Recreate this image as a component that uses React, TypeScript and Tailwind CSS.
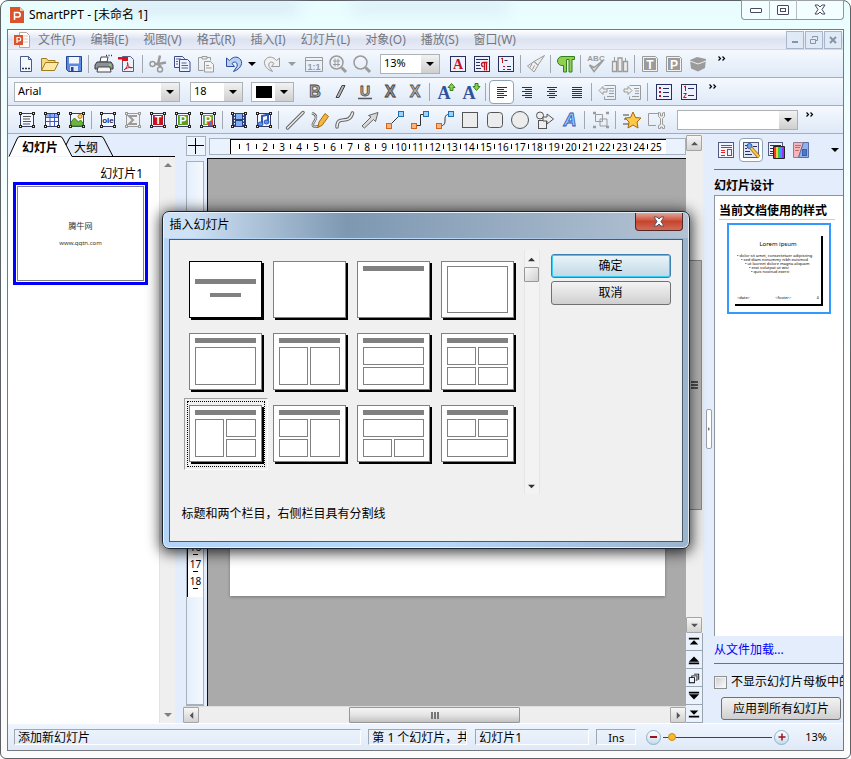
import { useState } from 'react';
import type { ReactNode } from 'react';
import clsx from 'clsx';

const NAVY = '#27305f';
const GRAY = '#9b9b9b';

function Svg({ children }: { children: ReactNode }) {
    return (
        <svg viewBox="0 0 20 20" className="w-5 h-5 shrink-0 overflow-visible" fill="none" aria-hidden="true">
            {children}
        </svg>
    );
}

// Object icons share a square frame with four grab handles
function Framed({ children, muted }: { children?: ReactNode; muted?: boolean }) {
    const line = muted ? GRAY : '#222';
    return (
        <Svg>
            <rect x="3.500" y="3.500" width="13" height="13" fill={muted ? '#f1f1f1' : '#f4f7ff'} stroke={muted ? GRAY : '#353c66'} />
            {children}
            {[[2, 2], [15, 2], [2, 15], [15, 15]].map(([x, y]) => (
                <rect key={`${x}-${y}`} x={x + 0.5} y={y + 0.5} width="2" height="2" fill={muted ? '#eee' : '#ffeeb0'} stroke={line} />
            ))}
        </Svg>
    );
}

function Letter({ x = 10, y = 15, size = 15, fill = '#fff', stroke, italic, children }: {
    x?: number; y?: number; size?: number; fill?: string; stroke?: string; italic?: boolean; children: ReactNode;
}) {
    return (
        <text x={x} y={y} fontSize={size} fill={fill} stroke={stroke} strokeWidth={stroke ? 0.8 : 0} textAnchor="middle"
            fontWeight="bold" fontStyle={italic ? 'italic' : 'normal'} fontFamily="Liberation Sans, sans-serif">
            {children}
        </text>
    );
}

const FileRow: Record<string, ReactNode> = {
    新建: (
        <Svg>
            <path d="M4.500 2.500h8l3 3v12h-11z" fill="#f5f8ff" stroke="#4a5a8a" />
            <path d="M12.500 2.500v3h3" stroke="#4a5a8a" />
            <path d="M6 14.500h2M9 14.500h2M12 14.500h2" stroke={NAVY} strokeWidth="1.600" />
        </Svg>
    ),
    打开: (
        <Svg>
            <path d="M1.500 16.500v-12h5l1.500 2h7v3" fill="#f7d983" stroke="#a07c1e" />
            <path d="M1.500 16.500l4-8h13l-4 8z" fill="#fde9a6" stroke="#a07c1e" />
        </Svg>
    ),
    保存: (
        <Svg>
            <path d="M2.500 2.500h15v15h-13l-2-2z" fill="#5b8be0" stroke="#27458f" />
            <rect x="5" y="3" width="10" height="6.500" fill="#f2f6ff" />
            <rect x="6" y="12" width="8" height="5" fill="#dfe7f7" />
            <rect x="7" y="13" width="2.500" height="4" fill="#27458f" />
        </Svg>
    ),
};

const OutputRow: Record<string, ReactNode> = {
    打印: (
        <Svg>
            <path d="M6 8l1-5h7l-1 5z" fill="#fff" stroke="#444" />
            <path d="M3 8h14l2 3v4H1v-4z" fill="#8d9299" stroke="#33373d" />
            <path d="M4 13h12l1 5H3z" fill="#f8f8f8" stroke="#444" />
            <path d="M15 11h2" stroke="#8ee04a" strokeWidth="1.500" />
            <path d="M12 1.500h1M14.500 1.500h1M17 1.500h1" stroke={NAVY} strokeWidth="1.500" />
        </Svg>
    ),
    导出PDF: (
        <Svg>
            <path d="M4.500 2.500h8l3 3v12h-11z" fill="#eef1f8" stroke="#53608a" />
            <path d="M0 3h10v4H4V5.500H0z" fill="#d8141c" />
            <path d="M6 16c3-2 4-5 3.500-7.500C10 13 12 14.500 14.500 13.500 11 13 8 14 6 16z" stroke="#d8141c" />
        </Svg>
    ),
};

const EditRow: Record<string, ReactNode> = {
    剪切: (
        <Svg>
            <path d="M12 1.500L10 10l3 3M18 8.500l-8 1.500H7" stroke={GRAY} strokeWidth="2.500" />
            <circle cx="4.500" cy="10" r="2.500" stroke={GRAY} strokeWidth="1.500" />
            <circle cx="12" cy="15.500" r="2.500" stroke={GRAY} strokeWidth="1.500" />
        </Svg>
    ),
    复制: (
        <Svg>
            <path d="M2.500 2.500h8l2 2v9h-10z" fill="#eef2ff" stroke="#3b4a80" />
            <path d="M7.500 5.500h8l2.500 2.500v9.500H7.500z" fill="#eef2ff" stroke="#3b4a80" />
            <path d="M9.500 9h5M9.500 11.500h6.500M9.500 14h6.500M4 5h5M4 7.500h2M4 10h2" stroke="#4f62a5" />
        </Svg>
    ),
    粘贴: (
        <Svg>
            <path d="M2.500 3.500h12v3M7.500 16.500h-5v-13" stroke={GRAY} />
            <path d="M6 2.500h5v2.500H6z" fill="#eee" stroke={GRAY} />
            <path d="M8.500 7.500h6l3 3v7.500h-9z" fill="#f4f4f4" stroke={GRAY} />
            <path d="M10 11.500h3M10 14h5.500" stroke={GRAY} />
        </Svg>
    ),
};

const Undo = (
    <Svg>
        <path d="M2.500 4v8.500H10.500L8 9.500c3-3 6-1 5 3L9.500 17.500C17 15 20 8 15.500 4.500c-3-2.500-7-1.500-10 2z" fill="#b9d0f5" stroke="#2b4d9b" />
    </Svg>
);

const Redo = (
    <Svg>
        <path d="M17.500 4v8.500H9.500L12 9.500c-3-3-6-1-5 3l3.500 5C3 15 0 8 4.500 4.500c3-2.500 7-1.500 10 2z" fill="#f1f1f1" stroke={GRAY} />
    </Svg>
);

const ZoomRow: Record<string, ReactNode> = {
    实际大小: (
        <Svg>
            <path d="M1.500 3.500h17v14h-17zM1.500 6.500h17" stroke={GRAY} />
            <Letter y={15.5} size={9} fill={GRAY}>1:1</Letter>
        </Svg>
    ),
    适合页面: (
        <Svg>
            <circle cx="8.500" cy="8.500" r="6.500" stroke={GRAY} strokeWidth="1.500" />
            <path d="M13.500 13.500l4.500 4.500" stroke={GRAY} strokeWidth="3" />
            <path d="M5 7h7M5 10.500h7M7 4.500v8M10 4.500v8" stroke={GRAY} />
        </Svg>
    ),
    缩放: (
        <Svg>
            <circle cx="8.500" cy="8.500" r="6.500" stroke={GRAY} strokeWidth="1.500" />
            <path d="M13.500 13.500l4.500 4.500" stroke={GRAY} strokeWidth="3" />
        </Svg>
    ),
};

const PanelRow: Record<string, ReactNode> = {
    字符格式: (
        <Svg>
            <rect x="2.500" y="2.500" width="15" height="15" fill="#eef2ff" stroke={NAVY} />
            <text x="10" y="15" fontSize="14" fontWeight="bold" textAnchor="middle" fill="#c3121d" fontFamily="Liberation Serif, serif">A</text>
        </Svg>
    ),
    段落格式: (
        <Svg>
            <rect x="2.500" y="2.500" width="15" height="15" fill="#eef2ff" stroke={NAVY} />
            <path d="M4 5.500h12M4 8.500h4M4 11.500h4M4 14.500h5" stroke={NAVY} />
            <path d="M15.500 8.500h-4a2 2 0 000 4M12.500 8.500v8M14.500 8.500v8" stroke="#c3121d" strokeWidth="1.300" />
        </Svg>
    ),
    编号格式: (
        <Svg>
            <rect x="2.500" y="2.500" width="15" height="15" fill="#eef2ff" stroke={NAVY} />
            <path d="M5 5l1.500-1v5M7 12.500h2M7 15.500h2" stroke="#c3121d" />
            <path d="M8.500 6.500h3M11 12.500h4M11 15.500h4" stroke={NAVY} />
        </Svg>
    ),
};

const Brush = (
    <Svg>
        <path d="M18.500 1.500l-6.500 9.500-4-3.500zM8 7.500l4 4-4 6.500-6.500-6z" fill="#eee" stroke={GRAY} />
        <path d="M6 9.500L4 13.500M8.500 11.500l-2 4" stroke={GRAY} />
    </Svg>
);

const Pilcrow = (
    <Svg>
        <path d="M18.500 2.500H6a4.500 4.500 0 000 9h1.500v6.500h3V5.500h2.500V18h3V5.500h2.500z" fill="#8fd04e" stroke="#35801a" />
    </Svg>
);

const ToolsRow: Record<string, ReactNode> = {
    拼写检查: (
        <Svg>
            <Letter y={7} size={8} fill={GRAY}>ABC</Letter>
            <path d="M3.500 11l4.500 6.500 9.500-11.500-9.500 7.500z" fill="#eee" stroke={GRAY} strokeWidth="1.500" />
        </Svg>
    ),
    同义词库: (
        <Svg>
            <path d="M2.500 7.500h4v10h-4zM8 4h4v13.500H8zM13.500 7.500h4v10h-4z" fill="#eee" stroke={GRAY} strokeWidth="1.300" />
            <path d="M4.500 7V3M15.500 7V4" stroke={GRAY} />
        </Svg>
    ),
};

const ObjectsRow: Record<string, ReactNode> = {
    文本文档: (
        <Svg>
            <path d="M2.500 2.500h13l2 2v13h-15z" fill="#f2f2f2" stroke={GRAY} />
            <rect x="4" y="4" width="12" height="12" fill={GRAY} />
            <Letter y={14.5} size={12}>T</Letter>
        </Svg>
    ),
    电子表格: (
        <Svg>
            <path d="M2.500 2.500h13l2 2v13h-15z" fill="#f2f2f2" stroke={GRAY} />
            <rect x="4" y="4" width="12" height="12" fill={GRAY} />
            <Letter y={14.5} size={12}>P</Letter>
        </Svg>
    ),
    组件: (
        <Svg>
            <path d="M2 6l7-3 9 2-1 9-7 3.500-7-3z" fill={GRAY} />
            <path d="M2 7l8 3 8-3" stroke="#eee" />
        </Svg>
    ),
};

const StyleRow: Record<string, ReactNode> = {
    加粗: <Svg><Letter size={16} fill="#b4b4b4" stroke="#444">B</Letter></Svg>,
    倾斜: <Svg><path d="M12 3.500h3l-6 12H6z" fill="#b4b4b4" stroke="#444" /></Svg>,
    下划线: <Svg><Letter y={13.5} size={14} fill="#b4b4b4" stroke="#444">U</Letter><path d="M3 16.500h14" stroke="#555" strokeWidth="1.500" /></Svg>,
    阴影: <Svg><Letter x={11} y={16} size={16} fill="#bbb">X</Letter><Letter size={16} fill="#999" stroke="#444">X</Letter></Svg>,
    删除线: <Svg><Letter size={16} fill="#b4b4b4" stroke="#555">X</Letter></Svg>,
};

function SizeIcon({ up }: { up?: boolean }) {
    return (
        <Svg>
            <text x="8" y="17" fontSize="18" fontWeight="bold" textAnchor="middle" fill="#30519b" fontFamily="Liberation Serif, serif">A</text>
            <path d={up ? 'M15.500 1.500l3.500 4h-2v3h-3v-3h-2z' : 'M15.500 8.500l3.500-4h-2v-3h-3v3h-2z'} fill="#8fd04e" stroke="#35801a" />
        </Svg>
    );
}

const alignPaths: Record<string, string> = {
    左对齐: 'M5 5.500h10M5 7.500h7M5 9.500h10M5 11.500h7M5 13.500h10M5 15.500h7',
    右对齐: 'M5 5.500h10M8 7.500h7M5 9.500h10M8 11.500h7M5 13.500h10M8 15.500h7',
    居中: 'M5 5.500h10M7 7.500h6M5 9.500h10M7 11.500h6M5 13.500h10M7 15.500h6',
    两端对齐: 'M5 5.500h10M5 7.500h10M5 9.500h10M5 11.500h10M5 13.500h10M5 15.500h10',
};

const IndentRow: Record<string, ReactNode> = {
    减少缩进: (
        <Svg>
            <path d="M6.500 3.500h11v14h-11v-3M9 6.500h7M11 9h5M11 11.500h5M9 14.500h7" stroke={GRAY} />
            <path d="M1 8.500l4-4v2.500h4v3H5v2.500z" fill="#eee" stroke={GRAY} />
        </Svg>
    ),
    增加缩进: (
        <Svg>
            <path d="M6.500 3.500h11v14h-11v-3M11 6.500h5M12 9h4M12 11.500h4M9 14.500h7" stroke={GRAY} />
            <path d="M9 8.500l-4-4v2.500H1v3h4v2.500z" fill="#eee" stroke={GRAY} />
        </Svg>
    ),
};

const BulletRow: Record<string, ReactNode> = {
    项目符号: (
        <Svg>
            <rect x="2.500" y="2.500" width="15" height="15" fill="#eef2ff" stroke={NAVY} />
            <path d="M5 6h2M5 10h2M5 14h2" stroke="#c3121d" strokeWidth="2" />
            <path d="M9 6.500h6M9 10.500h6M9 14.500h6" stroke={NAVY} />
        </Svg>
    ),
    编号: (
        <Svg>
            <rect x="2.500" y="2.500" width="15" height="15" fill="#eef2ff" stroke={NAVY} />
            <path d="M5 5l1.500-1v5M4.500 11.500h3l-3 4h3" stroke="#c3121d" />
            <path d="M9 6.500h6M9 13.500h6" stroke={NAVY} />
        </Svg>
    ),
};

const InsertRow: Record<string, ReactNode> = {
    文本框: <Framed><path d="M6 6.500h8M6 9h7M6 11.500h8M6 14h7" stroke="#555" /></Framed>,
    表格: (
        <Framed>
            <rect x="4" y="4" width="12" height="3" fill="#8eaaf0" />
            <path d="M4 7.500h12M4 11.500h12M8 4v12M12.500 4v12" stroke="#3a5cc0" />
        </Framed>
    ),
    图片: (
        <Framed>
            <path d="M4 16v-4l3.500-4 4 4 2-2 2.500 3v3z" fill="#6cb33e" stroke="#3b7f1c" />
            <circle cx="13" cy="6.500" r="2" fill="#ffd34d" stroke="#c47f12" />
        </Framed>
    ),
};

const OleRow: Record<string, ReactNode> = {
    OLE对象: <Framed><Letter y={13} size={8} fill="#222a55">ole</Letter></Framed>,
    公式: <Framed muted><path d="M14 6H6l4 4-4 4h8" stroke={GRAY} strokeWidth="2" /></Framed>,
    TextMaker对象: <Framed><rect x="5" y="5" width="10" height="10" fill="#c8131b" /><Letter y={14} size={11}>T</Letter></Framed>,
    PlanMaker对象: <Framed><rect x="5" y="5" width="10" height="10" fill="#5d9c1c" /><Letter y={14} size={11}>P</Letter></Framed>,
    图表: (
        <Framed>
            <rect x="5" y="5" width="10" height="10" fill="#6ba329" />
            <Letter y={14} size={11}>P</Letter>
            <path d="M10 16v-4h2v4zM14 16V9h1v7z" fill="#e23b2e" />
            <path d="M12 11h2v5h-2z" fill="#3d79d8" />
        </Framed>
    ),
};

const MediaRow: Record<string, ReactNode> = {
    影片: (
        <Framed>
            <rect x="4" y="3" width="12" height="14" fill="#2b3b7c" />
            <path d="M7 4h6v5H7zM7 11h6v5H7z" fill="#7fb0f2" />
            <path d="M5.500 4v12M14.500 4v12" stroke="#fff" strokeDasharray="1.500 1.500" />
        </Framed>
    ),
    声音: (
        <Framed>
            <path d="M8 14V6l6-1.500V12" stroke="#2b56b8" strokeWidth="2" />
            <ellipse cx="6.500" cy="14" rx="2.500" ry="2" fill="#5f93e8" stroke="#2b56b8" />
            <ellipse cx="12.500" cy="12" rx="2.500" ry="2" fill="#5f93e8" stroke="#2b56b8" />
        </Framed>
    ),
};

function Connector({ d }: { d: string }) {
    return (
        <Svg>
            <path d={d} stroke="#333" />
            <rect x="1.500" y="13.500" width="5" height="5" fill="#ffb27a" stroke="#d4641a" />
            <rect x="13.500" y="1.500" width="5" height="5" fill="#9fd2fa" stroke="#1f6fb5" />
        </Svg>
    );
}

const ShapeRow: Record<string, ReactNode> = {
    直线: <Svg><path d="M2.500 18L18 2.500" stroke="#666" strokeWidth="3.500" strokeLinecap="round" /><path d="M2.500 18L18 2.500" stroke="#eee" strokeWidth="1.500" strokeLinecap="round" /></Svg>,
    徒手线: (
        <Svg>
            <path d="M2 3c5 2 5 5 2 9s0 6 5 4" stroke="#666" strokeWidth="2.500" />
            <path d="M2 3c5 2 5 5 2 9s0 6 5 4" stroke="#eee" />
            <path d="M9 12l6-8.500 3.500 3L12 15.500l-4 1.500z" fill="#f3b63e" stroke="#a86a10" />
        </Svg>
    ),
    曲线: (
        <Svg>
            <path d="M2 17C2 4 14 16 17.500 3" stroke="#666" strokeWidth="3.500" strokeLinecap="round" />
            <path d="M2 17C2 4 14 16 17.500 3" stroke="#eee" strokeWidth="1.500" strokeLinecap="round" />
        </Svg>
    ),
    箭头: <Svg><path d="M2 16L11 7 8.500 5.500 18 2.500l-2.500 9-2-2L4.500 18z" fill="#d8d8d8" stroke="#666" /></Svg>,
    直线连接: <Connector d="M4 16L16 4" />,
    折线连接: <Connector d="M4 15.500h6.500V4.500h6" />,
    曲线连接: <Connector d="M4 16c12 0 0-12 12-12" />,
    矩形: <Svg><rect x="2.500" y="2.500" width="15" height="15" fill="#ececec" stroke="#555" /></Svg>,
    圆角矩形: <Svg><rect x="2.500" y="2.500" width="15" height="15" rx="3" fill="#ececec" stroke="#555" /></Svg>,
    椭圆: <Svg><circle cx="10" cy="10" r="8.500" fill="#ececec" stroke="#555" /></Svg>,
    自选图形: (
        <Svg>
            <circle cx="5" cy="5.500" r="3.500" fill="#eee" stroke="#555" />
            <rect x="3.500" y="10.500" width="8" height="8" fill="#eee" stroke="#555" />
            <path d="M8 7h4V4l6.500 5-6.500 5v-3H8z" fill="#eee" stroke="#555" />
        </Svg>
    ),
    艺术字: <Svg><Letter size={18} y={16} fill="#9cc5f8" stroke="#2b56b8" italic>A</Letter></Svg>,
};

const Group = (
    <Svg>
        <path d="M4.500 4.500h7v7h-7zM9 9h7v7H9z" stroke={GRAY} />
        <path d="M2 3h3M2 17h3M15 3h3M15 17h3" stroke={GRAY} strokeWidth="2.500" />
    </Svg>
);

const EffectRow: Record<string, ReactNode> = {
    动画: (
        <Svg>
            <path d="M1 5h6M2 9h4M1 14h6" stroke="#444" />
            <path d="M11 2l2.500 5.500 5.500.500-4 4 1 6-5-3-5 3 1-6-4-4 5.500-.500z" fill="#fcc94b" stroke="#a8680e" />
        </Svg>
    ),
    属性: (
        <Svg>
            <path d="M11 3.500H1.500v12H9" stroke={GRAY} />
            <path d="M11.500 2.500v4l2 2v6l-2 1v3h2v-1.500h2v1.500h2v-3l-2-1v-6l2-2v-4l-2 .500v3h-2v-3z" fill="#f2f2f2" stroke={GRAY} />
        </Svg>
    ),
};

const sideIcons: { name: string; icon: ReactNode }[] = [
    { name: '版式', icon: <Svg><rect x="2.500" y="2.500" width="15" height="15" fill="#f4f4ff" stroke="#555a80" /><path d="M5 5.500h11M5 7.500h11M5 10.500h4M5 12.500h4M5 15.500h4" stroke="#e0242c" /><rect x="11.500" y="9.500" width="4" height="6" stroke="#e0242c" /></Svg> },
    { name: '设计', icon: <Svg><rect x="2.500" y="2.500" width="15" height="15" fill="#dfe6f5" stroke="#555a80" /><path d="M4 5.500h3M4 8.500h2M4 11.500h5M4 14.500h7M12 6.500h4" stroke={NAVY} /><circle cx="8.500" cy="6" r="2.500" fill="#6aa2ef" stroke="#2b56b8" /><path d="M10 8l8 9" stroke="#9c6a10" strokeWidth="3.500" /><path d="M10 8l8 9" stroke="#fcc94b" strokeWidth="2" /></Svg> },
    { name: '配色', icon: <Svg><rect x="2.500" y="2.500" width="14" height="13" fill="#eef2ff" stroke="#555a80" /><path d="M4 5.500h11M4 8.500h4M4 11.500h4M4 13.500h4" stroke={NAVY} /><path d="M8 7h2v11H8z" fill="#e33" /><path d="M10 7h2v11h-2z" fill="#fc3" /><path d="M12 7h2v11h-2z" fill="#3c3" /><path d="M14 7h2v11h-2z" fill="#39f" /><path d="M16 7h2v11h-2z" fill="#93f" /><path d="M7.500 6.500h11v12h-11z" stroke="#222" /></Svg> },
    { name: '切换', icon: <Svg><path d="M2.500 2.500h10l-5 15h-5z" fill="#f4b6ba" stroke="#9a7a90" /><path d="M17.500 2.500h-5l-5 15h10z" fill="#8fb2e8" stroke="#5a70a5" /><path d="M4 5.500h6M4 7.500h5M4 10.500h4" stroke="#c66" /><rect x="11.500" y="9.500" width="4" height="6" fill="#4e78c8" stroke="#3f5fa8" /></Svg> },
];

const menus = ['文件(F)', '编辑(E)', '视图(V)', '格式(R)', '插入(I)', '幻灯片(L)', '对象(O)', '播放(S)', '窗口(W)'];

// Each box is [x, y, width, height] inside a 73x57 slide
type Box = [number, number, number, number];
interface Layout {
    label: string;
    title?: boolean;
    bars?: Box[];
    boxes?: Box[];
}

const layouts: Layout[] = [
    { label: '标题幻灯片', bars: [[6, 18, 61, 5], [21, 32, 31, 4]] },
    { label: '空白' },
    { label: '只有标题', title: true },
    { label: '只有内容', boxes: [[6, 5, 61, 47]] },
    { label: '标题和内容', title: true, boxes: [[6, 14, 61, 38]] },
    { label: '标题和两个栏目', title: true, boxes: [[6, 14, 29, 38], [37, 14, 30, 38]] },
    { label: '标题和两行', title: true, boxes: [[6, 14, 61, 18], [6, 34, 61, 18]] },
    { label: '标题和四个内容', title: true, boxes: [[6, 14, 29, 18], [37, 14, 30, 18], [6, 34, 29, 18], [37, 34, 30, 18]] },
    { label: '标题和两个栏目，右侧栏目具有分割线', title: true, boxes: [[6, 14, 29, 38], [37, 14, 30, 18], [37, 34, 30, 18]] },
    { label: '标题和两个栏目，左侧栏目具有分割线', title: true, boxes: [[6, 14, 29, 18], [6, 34, 29, 18], [37, 14, 30, 38]] },
    { label: '标题和两行，下方具有分割线', title: true, boxes: [[6, 14, 61, 18], [6, 34, 29, 18], [37, 34, 30, 18]] },
    { label: '标题和两行，上方具有分割线', title: true, boxes: [[6, 14, 29, 18], [37, 14, 30, 18], [6, 34, 61, 18]] },
];

function Arrow({ dir = 'down', className = 'w-2' }: { dir?: 'up' | 'down' | 'left' | 'right'; className?: string }) {
    const d = { up: 'M0 6l4-4 4 4z', down: 'M0 2h8L4 6z', left: 'M6 0v8L2 4z', right: 'M2 0v8l4-4z' }[dir];
    return <svg viewBox="0 0 8 8" className={className} fill="currentColor" aria-hidden="true"><path d={d} /></svg>;
}

function Separator() {
    return <span className="ml-0.5 w-1 h-[18px] border-l border-[#a3a8b0]" />;
}

function IconButtons({ items, slot }: { items: Record<string, ReactNode>; slot: string }) {
    return (
        <>
            {Object.entries(items).map(([name, icon]) => (
                <button key={name} title={name} className={clsx('h-6 shrink-0 flex items-center justify-center', slot)}>
                    {icon}
                </button>
            ))}
        </>
    );
}

function Combo({ label, value, className }: { label: string; value: string; className: string }) {
    return (
        <div className={clsx('relative shrink-0 h-5 bg-white border border-[#adb2b5] flex', className)}>
            <select aria-label={label} className="appearance-none w-full h-full pl-[3px] text-[11px] text-black outline-none">
                <option>{value}</option>
            </select>
            <span className="absolute right-0 inset-y-0 w-[18px] bg-gradient-to-b from-[#f2f2f2] to-[#cfcfcf] pointer-events-none flex items-center justify-center">
                <Arrow />
            </span>
        </div>
    );
}

function More() {
    return (
        <button title="更多" className="ml-2 mb-2.5">
            <svg viewBox="0 0 8 5" className="w-2 h-[5px]" fill="none" stroke="#000" strokeWidth="1.200" aria-hidden="true">
                <path d="M.500.500l2 2-2 2M4.500.500l2 2-2 2" />
            </svg>
        </button>
    );
}

function Toolbar({ children }: { children: ReactNode }) {
    return (
        <div role="toolbar" className="h-7 pl-1.5 flex items-center border-b border-[#a8adb4] bg-gradient-to-b from-[#f5f9fe] to-[#dfe9f7] overflow-hidden shrink-0">
            {children}
        </div>
    );
}

function TitleBar() {
    return (
        <header className="relative h-7 flex items-start pl-0.5 shrink-0">
            {/* Text of the window behind, seen through the glass */}
            <div className="absolute left-[102px] top-0.5 w-[190px] h-2 bg-[#b9c8e6]/60 blur-sm" />
            <div className="absolute left-[345px] top-0.5 w-[156px] h-2 bg-[#b9cbe0]/50 blur-sm" />
            <div className="relative flex items-center gap-1 h-7">
                <svg viewBox="0 0 14 16" className="w-[14px] h-4 mx-px" aria-hidden="true">
                    <path d="M0 0h10l4 4v12H0z" fill="#d9532c" />
                    <path d="M10 0v4h4z" fill="#f6c3b0" />
                    <path d="M4.500 13V5.500H8a2 2 0 010 4.500H4.500" fill="none" stroke="#fff" strokeWidth="1.500" />
                </svg>
                <h1 className="text-xs text-black">SmartPPT - [未命名 1]</h1>
            </div>
            <div className="relative ml-auto flex h-5 -mt-px border border-t-0 border-[#8e979c] rounded-b-[4px] divide-x divide-[#b6bdc1] bg-white/40">
                <button title="最小化" className="w-7 flex items-end justify-center pb-1.5"><span className="w-3 h-[5px] border border-[#444a60] bg-white rounded-[1px]" /></button>
                <button title="还原" className="w-[27px] flex items-center justify-center">
                    <span className="w-3 h-2.5 border border-[#444a60] bg-white rounded-[1px] flex items-center justify-center"><span className="w-1.5 h-1 border border-[#444a60]" /></span>
                </button>
                <button title="关闭" className="w-[46px] flex items-center justify-center">
                    <svg viewBox="0 0 12 11" className="w-3 h-[11px]"><path d="M1 1h3l2 2 2-2h3L8 5.500l3 4.500H8L6 8l-2 2H1l3-4.500z" fill="#fff" stroke="#444a60" /></svg>
                </button>
            </div>
        </header>
    );
}

function MenuBar() {
    const childButton = 'w-[18px] h-[18px] border border-[#a9b5c9] bg-[#dfeaf6] flex items-center justify-center';
    return (
        <nav className="h-5 flex items-center gap-px pl-1.5 pr-px border-b border-[#d5d9e4] bg-gradient-to-b from-white via-[#dde2f1] to-[#e9edf8] shrink-0">
            <svg viewBox="0 0 16 16" className="w-4 h-4" aria-hidden="true">
                <path d="M5.500.500h7l3 3v12h-10z" fill="#fff" stroke="#b9a8a0" />
                <path d="M9 4h5M9 7h5M9 10h5" stroke="#e5c4b8" />
                <rect y="3" width="9" height="10" fill="#d9532c" />
                <path d="M3 11V5.500h2a1.500 1.500 0 010 3.500H3" fill="none" stroke="#fff" strokeWidth="1.200" />
            </svg>
            {menus.map((menu) => (
                <button key={menu} className="px-[7px] text-xs leading-none text-[#737680] whitespace-nowrap">{menu}</button>
            ))}
            <div className="ml-auto flex gap-px">
                <button title="最小化文档" className={childButton}><span className="w-1.5 h-0.5 mt-1 bg-[#8795a8]" /></button>
                <button title="还原文档" className={childButton}>
                    <svg viewBox="0 0 8 8" className="w-2 h-2" fill="none" stroke="#8795a8"><path d="M2.500 2V.500h5v4H6M.500 3.500h5v4h-5z" /></svg>
                </button>
                <button title="关闭文档" className={childButton}>
                    <svg viewBox="0 0 8 8" className="w-2 h-2" stroke="#8795a8" strokeWidth="2"><path d="M1 1l6 6M7 1L1 7" /></svg>
                </button>
            </div>
        </nav>
    );
}

function SlideList() {
    return (
        <aside className="w-[167px] shrink-0 flex flex-col">
            <div role="tablist" className="relative h-[23px] pt-1 flex items-center text-xs leading-4">
                <svg viewBox="0 0 167 23" className="absolute inset-0 w-full h-full" fill="none" stroke="#000" aria-hidden="true">
                    <path d="M0 22.500L9 5q1-2.500 3-2.500h40q2 0 3 2.500l9 17.500z" fill="#fff" stroke="none" />
                    <path d="M1 22.500L9 5q1-2.500 3-2.500h40q2 0 3 2.500l9 17.500h103" />
                    <path d="M58 11l3-6q1-2.500 3-2.500h29q2 0 3 2.500l9 17.500" />
                </svg>
                <button role="tab" aria-selected="true" className="relative ml-3.5 font-bold">幻灯片</button>
                <button role="tab" aria-selected="false" className="relative ml-4">大纲</button>
            </div>
            <div className="flex-1 flex bg-white">
                <div className="flex-1 pl-[5px] pt-[9px]">
                    <p className="w-[130px] text-right text-xs leading-4">幻灯片1</p>
                    <button className="w-[135px] h-[103px] border-[3px] border-[#0000ff] p-px">
                        <span className="w-full h-full border border-[#808080] flex flex-col items-center justify-center gap-2 text-[#333]">
                            <span className="text-[8px] leading-[10px]">腾牛网</span>
                            <span className="text-[6px] leading-[8px]">www.qqtn.com</span>
                        </span>
                    </button>
                </div>
                <div className="w-4 bg-[#efefef] border-l border-[#e3e3e3] flex flex-col justify-between items-center py-1 text-[#808080]">
                    <Arrow dir="up" />
                    <Arrow />
                </div>
            </div>
        </aside>
    );
}

function HorizontalRuler() {
    return (
        <div className="flex-1 h-[17px] border border-[#a7b0bd] bg-[#eaf2fd] flex overflow-hidden">
            <div className="ml-5 w-[436px] border-l border-t border-black bg-white flex pl-2 text-[10px] leading-none">
                {Array.from({ length: 25 }, (_, i) => (
                    <span key={i} className="w-[17px] shrink-0 flex items-center">
                        <span className="w-px h-[5px] bg-black" />
                        <span className="flex-1 text-center">{i + 1}</span>
                    </span>
                ))}
            </div>
        </div>
    );
}

function VerticalRuler() {
    return (
        <div className="w-[18px] ml-[3px] mt-[3px] border border-[#a7b0bd] border-b-2 bg-gradient-to-r from-[#e4eefb] to-[#f5f9fe] flex flex-col overflow-hidden">
            <div className="flex-1" />
            <div className="h-[326px] mb-[107px] bg-white border-l border-black flex flex-col justify-end text-[10px] leading-none pb-2">
                {Array.from({ length: 18 }, (_, i) => (
                    <span key={i} className="h-[17px] shrink-0 flex flex-col items-center justify-end gap-0.5">
                        <span>{i + 1}</span>
                        <span className="w-[5px] h-px bg-black" />
                    </span>
                ))}
            </div>
        </div>
    );
}

function ScrollButton({ dir, className }: { dir: 'up' | 'down' | 'left' | 'right'; className: string }) {
    return (
        <button title="滚动" className={clsx('shrink-0 border border-[#a5a5a5] rounded-[1px] bg-gradient-to-b from-[#f7f7f7] to-[#d2d2d2] flex items-center justify-center text-[#555]', className)}>
            <Arrow dir={dir} className="w-[7px]" />
        </button>
    );
}

const pageIcons: { name: string; d: string }[] = [
    { name: '第一张', d: 'M2 2h12v2H2zM8 5l5 5H3z' },
    { name: '上一张', d: 'M8 3l6 6H2zM2 10h12v2H2z' },
    { name: '浏览对象', d: 'M2 6h7v1H3v5h5V7h1v6H2zM5 4h7v6h-2V9h1V5H6v1H5zM8 2h6v7h-1V3H8z' },
    { name: '下一张', d: 'M2 2h12v2H2zM2 5h12l-6 6z' },
    { name: '最后一张', d: 'M3 3h10L8 8zM2 9h12v2H2z' },
];

function Editor() {
    return (
        <section className="ml-2 flex-1 min-w-0 flex">
            <div className="flex-1 min-w-0 flex flex-col">
                <div className="h-6 shrink-0 flex items-center pl-[3px] gap-[3px]">
                    <div className="w-5 h-5 border border-[#a7b0bd] bg-[#eef4fd] flex items-center justify-center">
                        <svg viewBox="0 0 18 18" className="w-[18px] h-[18px]" stroke="#000"><path d="M1 8.500h16M8.500 1v16" /></svg>
                    </div>
                    <HorizontalRuler />
                </div>
                <div className="flex-1 flex min-h-0">
                    <VerticalRuler />
                    <div className="ml-[3px] flex-1 min-w-0 border-l border-t border-[#111] bg-[#aaaaaa] flex flex-col justify-end items-start">
                        <div className="ml-[22px] w-[435px] max-w-full h-[326px] mb-[110px] bg-white shadow-[0_1px_3px_rgba(0,0,0,0.3)]" />
                    </div>
                </div>
                <div className="h-[17px] shrink-0 flex bg-[#eeeeee] border-t border-[#dedede]">
                    <ScrollButton dir="left" className="w-4 h-4" />
                    <div className="flex-1 flex">
                        <button title="水平滚动条" className="ml-[150px] w-[171px] border border-[#979797] rounded-[1px] bg-gradient-to-b from-[#f5f5f5] via-[#e4e4e4] to-[#c2c2c2] flex items-center justify-center gap-px">
                            <span className="w-0.5 h-[7px] bg-[#777]" />
                            <span className="w-0.5 h-[7px] bg-[#777]" />
                            <span className="w-0.5 h-[7px] bg-[#777]" />
                        </button>
                    </div>
                    <ScrollButton dir="right" className="w-4 h-4" />
                </div>
            </div>
            <div className="w-[17px] shrink-0 flex flex-col bg-[#efefef]">
                <ScrollButton dir="up" className="w-4 h-4 mt-px" />
                <div className="flex-1 flex flex-col">
                    <button title="垂直滚动条" className="mt-[109px] h-[250px] w-4 border border-[#8a8a8a] bg-gradient-to-r from-[#dcdcdc] to-[#b5b5b5] flex flex-col items-center justify-center gap-px">
                        <span className="w-[7px] h-0.5 bg-[#555]" />
                        <span className="w-[7px] h-0.5 bg-[#555]" />
                        <span className="w-[7px] h-0.5 bg-[#555]" />
                    </button>
                </div>
                <ScrollButton dir="down" className="w-4 h-4" />
                {pageIcons.map(({ name, d }) => (
                    <button key={name} title={name} className="h-[18px] flex items-center justify-center bg-[#eaf2fd] border-b border-r border-[#9aa3b0]">
                        <svg viewBox="0 0 16 14" className="w-[14px] h-3"><path d={d} fill="#000" /></svg>
                    </button>
                ))}
            </div>
        </section>
    );
}

function DesignPanel() {
    return (
        <aside className="w-[129px] shrink-0 flex flex-col overflow-hidden">
            <div className="h-9 flex items-center pb-1 gap-px border-b border-[#6d7278]">
                {sideIcons.map(({ name, icon }, i) => (
                    <button
                        key={name}
                        title={name}
                        className={clsx('w-6 h-6 shrink-0 flex items-center justify-center', i === 1 && 'border border-[#8fa5b5] rounded-[4px] bg-white')}
                    >
                        {icon}
                    </button>
                ))}
                <button title="选项" className="ml-auto mr-1"><Arrow /></button>
            </div>
            <h2 className="pt-2 h-[25px] text-xs leading-4 font-bold">幻灯片设计</h2>
            <div className="flex-1 bg-white border-l border-t border-[#8f959d] pl-1">
                <h3 className="mt-1.5 h-[18px] mr-2 text-xs leading-[17px] font-bold border-b border-[#c5cfe0] whitespace-nowrap">当前文档使用的样式</h3>
                <button className="mt-[3px] ml-2 w-[104px] h-[91px] border-2 border-[#3399ff] p-1.5">
                    <span className="h-[70px] mt-1 flex flex-col border-r-2 border-b-2 border-black bg-white text-black text-left text-[4px] leading-[4px] pb-1 overflow-hidden">
                        <span className="pt-1 pb-1.5 text-center text-[6px] leading-[8px]">Lorem ipsum</span>
                        <span className="pl-0.5 whitespace-nowrap">• dolor sit amet, consectetuer adipiscing</span>
                        <span className="pl-1.5 whitespace-nowrap">• sed diam nonummy nibh euismod</span>
                        <span className="pl-2.5 whitespace-nowrap">• ut laoreet dolore magna aliquam</span>
                        <span className="pl-3.5 whitespace-nowrap">• erat volutpat ut wisi</span>
                        <span className="pl-4 whitespace-nowrap">• quis nostrud exerci</span>
                        <span className="mt-auto flex justify-between px-0.5"><span>&lt;date&gt;</span><span>&lt;footer&gt;</span><span>#</span></span>
                    </span>
                </button>
            </div>
            <a href="#load" className="h-7 flex items-center text-xs text-[#0000ff] border-b border-[#6d7278]">从文件加载...</a>
            <label className="mt-2.5 flex items-center gap-1 text-xs leading-4 whitespace-nowrap">
                <input type="checkbox" className="appearance-none w-[13px] h-[13px] shrink-0 border border-[#8e8f8f] bg-gradient-to-br from-[#c9ccd0] to-white shadow-[inset_0_0_0_1px_#f4f4f4]" />
                不显示幻灯片母板中的对象
            </label>
            <button className="ml-[7px] mr-0.5 mt-[7px] mb-[3px] h-[23px] border border-[#707070] rounded-[3px] bg-gradient-to-b from-[#f3f3f3] via-[#e2e2e2] to-[#cfcfcf] text-xs leading-none">
                应用到所有幻灯片
            </button>
        </aside>
    );
}

function StatusBar() {
    const field = 'h-4 pl-[3px] border-l border-t border-[#9fa6b0] border-r border-r-white border-b border-b-white text-xs leading-[15px] whitespace-nowrap overflow-hidden';
    const zoomButton = 'w-[15px] h-[15px] shrink-0 rounded-full border border-[#8fb0c8] bg-gradient-to-b from-white to-[#c3dcec] flex items-center justify-center';
    return (
        <footer className="h-[27px] shrink-0 flex items-center pl-1.5 border-t border-white bg-gradient-to-b from-[#eff5fd] to-[#dfe9f7]">
            <div className={clsx(field, 'flex-1')}>添加新幻灯片</div>
            <div className={clsx(field, 'ml-[7px] w-[99px]')}>第 1 个幻灯片，共 1 个</div>
            <div className={clsx(field, 'ml-2 w-[114px]')}>幻灯片1</div>
            <div className={clsx(field, 'ml-[7px] w-10 pr-[3px] text-center text-[11px]')}>Ins</div>
            <button title="缩小" className={clsx(zoomButton, 'ml-2.5')}><span className="w-[7px] h-0.5 bg-[#a01020]" /></button>
            <input
                type="range"
                aria-label="缩放"
                defaultValue={5}
                className="mx-0.5 w-[109px] h-4 appearance-none bg-transparent [&::-webkit-slider-runnable-track]:h-px [&::-webkit-slider-runnable-track]:bg-[#444] [&::-webkit-slider-thumb]:appearance-none [&::-webkit-slider-thumb]:w-2 [&::-webkit-slider-thumb]:h-2 [&::-webkit-slider-thumb]:-mt-1 [&::-webkit-slider-thumb]:rounded-full [&::-webkit-slider-thumb]:bg-[#fbb829] [&::-webkit-slider-thumb]:border [&::-webkit-slider-thumb]:border-[#c98d1f]"
            />
            <button title="放大" className={zoomButton}>
                <svg viewBox="0 0 8 8" className="w-2 h-2" stroke="#a01020" strokeWidth="1.500"><path d="M4 .500v7M.500 4h7" /></svg>
            </button>
            <span className="ml-4 mr-4 text-[11px]">13%</span>
        </footer>
    );
}

function LayoutThumb({ layout, primary }: { layout: Layout; primary: boolean }) {
    const bars: Box[] = layout.title ? [[6, 5, 61, 5]] : layout.bars ?? [];
    return (
        <svg viewBox="0 0 75 59" className="w-[75px] h-[59px]" fill="none" aria-hidden="true">
            <rect x="2" y="2" width="73" height="57" fill="#000" />
            <rect x="0.5" y="0.5" width="72" height="56" fill="#fff" stroke={primary ? '#000' : '#808080'} />
            {bars.map(([x, y, w, h]) => (
                <rect key={`${x}-${y}`} x={x} y={y} width={w} height={h} fill="#808080" />
            ))}
            {layout.boxes?.map(([x, y, w, h]) => (
                <rect key={`${x}-${y}`} x={x + 0.5} y={y + 0.5} width={w - 1} height={h - 1} stroke="#808080" />
            ))}
        </svg>
    );
}

function InsertSlideDialog() {
    const [selected, setSelected] = useState(8);

    return (
        <div className="fixed inset-0 flex items-center justify-center">
            <div
                role="dialog"
                aria-label="插入幻灯片"
                className="relative w-[528px] h-[338px] flex flex-col border border-[#1c2530] rounded-[7px] p-1.5 pt-0 bg-gradient-to-r from-[#b4d5f7] via-[#b9d9fb] to-[#9bb4ce] shadow-[0_2px_14px_2px_rgba(0,0,0,0.75),inset_0_0_0_1px_rgba(255,255,255,0.7)]"
            >
                <div className="-mx-[5px] mt-px mb-px pl-1 h-[25px] flex items-start rounded-t-[5px] bg-gradient-to-r from-[#cfe2f5] from-5% via-[#7e98b2] via-35% to-[#b4c3d4]">
                    <h2 className="pl-0.5 text-xs leading-6 text-black">插入幻灯片</h2>
                    <button title="关闭" className="ml-auto mr-[5px] w-12 h-[18px] border border-t-0 border-[#5a2525] rounded-b-[4px] bg-gradient-to-b from-[#e0a598] via-[#c8432c] to-[#cd6c58] flex items-center justify-center">
                        <svg viewBox="0 0 12 11" className="w-3 h-[11px]"><path d="M1 1h3l2 2 2-2h3L8 5.500l3 4.500H8L6 8l-2 2H1l3-4.500z" fill="#fff" stroke="#4d5570" /></svg>
                    </button>
                </div>
                <div className="flex-1 border border-[#4d5a68] bg-[#f0f0f0] flex flex-col">
                    <div className="flex items-start pl-3.5 pt-2.5">
                        <div className="grid grid-cols-4 pt-1">
                            {layouts.map((layout, i) => (
                                <button
                                    key={layout.label}
                                    title={layout.label}
                                    onClick={() => setSelected(i)}
                                    className={clsx(
                                        'w-[84px] h-[72px] border p-0.5',
                                        i === selected ? 'border-t-[#a0a0a0] border-l-[#a0a0a0] border-b-white border-r-white' : 'border-transparent'
                                    )}
                                >
                                    <span className={clsx('w-full h-full flex pl-px pt-[3px] border border-dotted', i === selected ? 'border-black' : 'border-transparent')}>
                                        <LayoutThumb layout={layout} primary={i === 0} />
                                    </span>
                                </button>
                            ))}
                        </div>
                        <div className="ml-1 w-4 h-[244px] border-x border-[#e6e6e6] bg-[#f3f3f3] flex flex-col items-center pt-1.5 pb-1 text-[#333]">
                            <Arrow dir="up" className="w-[7px]" />
                            <button title="滚动条" className="mt-1 w-[15px] h-[15px] shrink-0 border border-[#979797] rounded-[1px] bg-gradient-to-br from-[#fafafa] to-[#d0d0d0]" />
                            <span className="mt-auto"><Arrow className="w-[7px]" /></span>
                        </div>
                        <div className="ml-[11px] mt-1 w-[120px] flex flex-col gap-[3px] text-xs">
                            <button className="h-6 border border-[#3c7fb1] rounded-[3px] bg-gradient-to-b from-[#eaf6fb] via-[#d5e6ef] to-[#bfd8e6] shadow-[inset_0_0_0_1px_#38cdf7]">确定</button>
                            <button className="h-6 border border-[#707070] rounded-[3px] bg-gradient-to-b from-[#f3f3f3] via-[#e2e2e2] to-[#cfcfcf]">取消</button>
                        </div>
                    </div>
                    <p className="mt-3 pl-3 text-xs leading-4">{layouts[selected].label}</p>
                </div>
            </div>
        </div>
    );
}

export default function App() {
    return (
        <div className="h-screen bg-white overflow-hidden font-['Noto_Sans','Noto_Sans_CJK_SC',sans-serif] text-black">
            <div className="h-full flex flex-col border border-[#5d6166] rounded-t-[8px] rounded-b-[6px] px-1.5 pb-[7px] bg-gradient-to-b from-[#e9fdff] via-white to-[#fbfbfb]">
                <TitleBar />
                <div className="flex-1 min-h-0 flex flex-col border border-[#75797e] bg-[#e3edfb]">
                    <MenuBar />
                    <Toolbar>
                        <IconButtons items={FileRow} slot="w-6" />
                        <Separator />
                        <IconButtons items={OutputRow} slot="w-6" />
                        <Separator />
                        <IconButtons items={EditRow} slot="w-6" />
                        <span className="w-1" />
                        <IconButtons items={{ 撤消: Undo }} slot="w-6" />
                        <button title="撤消列表" className="w-3 flex justify-center"><Arrow /></button>
                        <span className="w-0.5" />
                        <IconButtons items={{ 重做: Redo }} slot="w-6" />
                        <button title="重做列表" className="w-3 ml-0.5 flex justify-center text-[#9b9b9b]"><Arrow /></button>
                        <span className="w-1" />
                        <IconButtons items={ZoomRow} slot="w-6" />
                        <Combo label="缩放比例" value="13%" className="ml-1.5 w-[60px]" />
                        <span className="w-1.5" />
                        <IconButtons items={PanelRow} slot="w-6" />
                        <Separator />
                        <IconButtons items={{ 格式刷: Brush }} slot="w-6" />
                        <Separator />
                        <IconButtons items={{ 显示标记: Pilcrow }} slot="w-6" />
                        <Separator />
                        <IconButtons items={ToolsRow} slot="w-6" />
                        <Separator />
                        <IconButtons items={ObjectsRow} slot="w-6" />
                        <More />
                    </Toolbar>
                    <Toolbar>
                        <Combo label="字体" value="Arial" className="w-[166px]" />
                        <Combo label="字号" value="18" className="ml-2.5 w-[53px]" />
                        <div className="ml-2 w-[43px] h-5 border border-[#adb2b5] bg-white flex">
                            <button title="字体颜色" className="flex-1 flex items-center justify-center"><span className="w-4 h-3 bg-black" /></button>
                            <button title="更多颜色" className="w-[18px] bg-gradient-to-b from-[#f2f2f2] to-[#cfcfcf] flex items-center justify-center"><Arrow /></button>
                        </div>
                        <span className="w-2" />
                        <IconButtons items={StyleRow} slot="w-[25px]" />
                        <Separator />
                        <IconButtons items={{ 增大字号: <SizeIcon up />, 减小字号: <SizeIcon /> }} slot="w-[25px]" />
                        <Separator />
                        {Object.entries(alignPaths).map(([name, d], i) => (
                            <button
                                key={name}
                                title={name}
                                className={clsx('w-[25px] h-6 shrink-0 flex items-center justify-center', i === 0 && 'border border-[#8fa5b5] rounded-[4px] bg-white')}
                            >
                                <Svg><path d={d} stroke={NAVY} /></Svg>
                            </button>
                        ))}
                        <Separator />
                        <IconButtons items={IndentRow} slot="w-[25px]" />
                        <Separator />
                        <IconButtons items={BulletRow} slot="w-[25px]" />
                        <More />
                    </Toolbar>
                    <Toolbar>
                        <IconButtons items={InsertRow} slot="w-[25px]" />
                        <Separator />
                        <IconButtons items={OleRow} slot="w-[25px]" />
                        <Separator />
                        <IconButtons items={MediaRow} slot="w-[25px]" />
                        <Separator />
                        <IconButtons items={ShapeRow} slot="w-[25px]" />
                        <Separator />
                        <IconButtons items={{ 组合: Group }} slot="w-[25px]" />
                        <Separator />
                        <IconButtons items={EffectRow} slot="w-[25px]" />
                        <Combo label="样式" value="" className="ml-2 w-[121px]" />
                        <More />
                    </Toolbar>
                    <main className="flex-1 min-h-0 flex">
                        <SlideList />
                        <Editor />
                        <div className="w-[11px] shrink-0 flex items-center justify-center">
                            <button title="折叠面板" className="w-1.5 h-10 border border-[#9a9fa8] rounded-[2px] bg-white flex items-center justify-center text-[#777]">
                                <Arrow dir="right" className="w-1 shrink-0" />
                            </button>
                        </div>
                        <DesignPanel />
                    </main>
                    <StatusBar />
                </div>
            </div>
            <InsertSlideDialog />
        </div>
    );
}
